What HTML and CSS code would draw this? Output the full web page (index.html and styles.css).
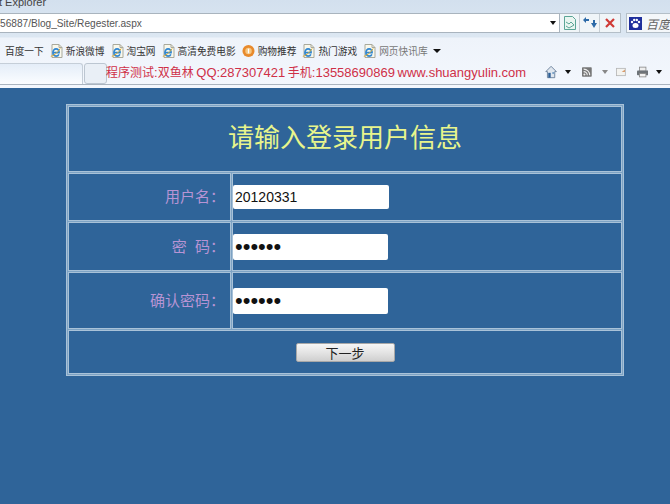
FILE: index.html
```html
<!DOCTYPE html>
<html lang="zh-CN">
<head>
<meta charset="utf-8">
<title>Regester</title>
<link rel="stylesheet" href="styles.css">
</head>
<body>
<svg class="defs" width="0" height="0" aria-hidden="true">
  <symbol id="ie" viewBox="0 0 13 14">
    <path d="M2 .5h7l3 3v10H2z" fill="#f9f8ec" stroke="#a9a99c"/>
    <path d="M9 .5v3h3" fill="none" stroke="#a9a99c"/>
    <path d="M3.200 8.600h5.900c.2-2.200-1.200-3.700-3-3.700-1.900 0-3.200 1.600-3.200 3.700 0 2.100 1.400 3.500 3.200 3.500 1.300 0 2.300-.6 2.800-1.700" fill="none" stroke="#2f86d2" stroke-width="1.600"/>
    <path d="M.8 12.300c1.800-.1 6.800-3.400 9.400-7.800" stroke="#e0ad30" fill="none"/>
  </symbol>
</svg>
<header class="chrome">
  <div class="titlebar">t Explorer</div>
  <div class="addressrow">
    <div class="address">
      <span class="url">56887/Blog_Site/Regester.aspx</span>
      <span class="caret"></span>
    </div>
    <div class="navbtns">
      <span class="navbtn"><svg width="14" height="16" viewBox="0 0 14 16"><path d="M1.500 1.500h8l3 3v10h-11z" fill="#e9f5f0" stroke="#5ba596"/><path d="M3 7l3 2 2-2 3 3M3 11l3 2 5-3" stroke="#5ba596" fill="none"/></svg></span>
      <span class="navbtn"><svg width="14" height="14" viewBox="0 0 14 14"><path d="M6 3H3V1L0 4l3 3V5h3z" fill="#2c6aa8"/><path d="M8 7h2V4h2v3h2l-3 5z" fill="#2c6aa8"/></svg></span>
      <span class="navbtn"><svg width="12" height="12" viewBox="0 0 12 12"><path d="M2 2l8 8M10 2l-8 8" stroke="#cf3a35" stroke-width="2.200"/></svg></span>
    </div>
    <div class="search">
      <svg width="13" height="13" viewBox="0 0 13 13"><rect width="13" height="13" fill="#1f2f9c"/><ellipse cx="6.500" cy="8.500" rx="3" ry="2.500" fill="#fff"/><circle cx="3" cy="5" r="1.200" fill="#fff"/><circle cx="5.200" cy="3" r="1.200" fill="#fff"/><circle cx="7.800" cy="3" r="1.200" fill="#fff"/><circle cx="10" cy="5" r="1.200" fill="#fff"/></svg>
      <span class="searchtext">百度一下</span>
    </div>
  </div>
  <div class="favorites">
    <span class="fav">百度一下</span>
    <span class="fav"><svg class="page"><use href="#ie"/></svg>新浪微博</span>
    <span class="fav"><svg class="page"><use href="#ie"/></svg>淘宝网</span>
    <span class="fav"><svg class="page"><use href="#ie"/></svg>高清免费电影</span>
    <span class="fav"><svg class="page" viewBox="0 0 14 14"><circle cx="7" cy="7" r="6.500" fill="#e88a2c"/><circle cx="7" cy="7" r="3.500" fill="#f6c67f"/><path d="M7 4.500v5" stroke="#fff" stroke-width="1.400"/></svg>购物推荐</span>
    <span class="fav"><svg class="page"><use href="#ie"/></svg>热门游戏</span>
    <span class="fav muted"><svg class="page"><use href="#ie"/></svg>网页快讯库<span class="caret wide"></span></span>
  </div>
  <div class="commands">
    <div class="tabs"><span class="tab"></span><span class="newtab"></span></div>
    <div class="notice"><span class="cjk">程序测试</span>:<span class="cjk">双鱼林</span> QQ:287307421 <span class="cjk">手机</span>:13558690869 www.shuangyulin.com</div>
    <div class="tools">
      <svg width="15" height="16" viewBox="0 0 15 16"><path d="M7.500 1L1 7.500h2V15h9V7.500h2z" fill="#dfe6ee" stroke="#5a7390"/><rect x="4" y="9" width="3" height="6" fill="#2d5f96"/><rect x="9" y="8" width="2.500" height="2.500" fill="#7fa4c8"/></svg>
      <span class="caret"></span>
      <svg class="rss" width="12" height="12" viewBox="0 0 12 12"><rect width="12" height="12" rx="1" fill="#777"/><circle cx="3" cy="9" r="1.300" fill="#eee"/><path d="M2 5.500c2.500 0 4.500 2 4.500 4.500M2 2.500c4.200 0 7.500 3.300 7.500 7.500" stroke="#eee" stroke-width="1.400" fill="none"/></svg>
      <span class="caret pale"></span>
      <svg class="mail" width="12" height="10" viewBox="0 0 12 10"><rect x=".5" y=".5" width="11" height="9" fill="#f3f3f0" stroke="#b4b4b4"/><path d="M7 5l4-3v3z" fill="#d99a6a"/></svg>
      <svg class="printer" width="14" height="14" viewBox="0 0 14 14"><rect x="3" y="1" width="8" height="5" fill="#eee" stroke="#888"/><rect x="0" y="5" width="14" height="6" rx="1" fill="#6d7378"/><rect x="3" y="9" width="8" height="4" fill="#f4f4f4" stroke="#888"/></svg>
      <span class="caret"></span>
    </div>
  </div>
</header>
<main class="page-body">
  <table class="form-table">
    <tr class="row-title"><td colspan="2" class="title">请输入登录用户信息</td></tr>
    <tr class="row-user">
      <td class="label">用户名：</td>
      <td class="field"><input class="input wide-input" type="text" value="20120331"></td>
    </tr>
    <tr class="row-pass">
      <td class="label">密&nbsp;&nbsp;码：</td>
      <td class="field"><input class="input tall" type="password" value="123456"></td>
    </tr>
    <tr class="row-confirm">
      <td class="label">确认密码：</td>
      <td class="field"><input class="input tall" type="password" value="123456"></td>
    </tr>
    <tr class="row-submit">
      <td colspan="2" class="actions"><button class="next" type="button">下一步</button></td>
    </tr>
  </table>
</main>
</body>
</html>
```
FILE: styles.css
```css
* { box-sizing: border-box; }
html, body { margin: 0; height: 100%; }
body {
  background: #2f6499;
  font-family: "Liberation Sans", "Noto Sans CJK SC", sans-serif;
  overflow: hidden;
}
.defs { display: block; height: 0; }
.chrome {
  height: 88px;
  display: flex;
  flex-direction: column;
  background: linear-gradient(#d3e0ee, #dce7f2 37px, #eef3fa 38px, #f3f7fd 84px);
  overflow: hidden;
}
.titlebar {
  height: 13px;
  line-height: 4px;
  font-size: 11px;
  color: #444;
  text-indent: -1px;
}
.addressrow {
  height: 20px;
  display: flex;
  gap: 7px;
}
.address {
  width: 560px;
  flex: none;
  display: flex;
  align-items: center;
  justify-content: space-between;
  background: #fff;
  border: 1px solid #a9b4be;
  border-left: 0;
  padding-right: 3px;
}
.url { font-size: 10.15px; color: #555; }
.caret {
  display: inline-block;
  width: 0;
  height: 0;
  border-style: solid;
  border-width: 4px 3.500px 0;
  border-color: #111 transparent transparent;
}
.caret.wide { border-width: 4px 4px 0; margin-left: 2px; vertical-align: 2px; }
.caret.pale { border-top-color: #888; }
.navbtns {
  display: flex;
  margin-left: -7px;
  background: #f0f5f8;
  border: 1px solid #b4bfc8;
  border-left: 0;
}
.navbtn {
  width: 20px;
  display: flex;
  align-items: center;
  justify-content: center;
  border-right: 1px solid #c6ced4;
}
.navbtn:last-child { border-right: 0; }
.search {
  flex: 1;
  display: flex;
  align-items: center;
  gap: 4px;
  padding-left: 2px;
  margin-left: -2px;
  margin-right: -30px;
  background: #f4f7fa;
  border: 1px solid #b4bfc8;
}
.searchtext { font-size: 12px; font-style: italic; color: #666; white-space: nowrap; }
.favorites {
  height: 25px;
  margin-top: 5px;
  display: flex;
  align-items: center;
  gap: 6px;
  padding-left: 5px;
  font-size: 9.7px;
  color: #333;
  white-space: nowrap;
}
.fav { display: inline-flex; align-items: center; gap: 3px; }
.fav.muted { color: #777; }
.page { width: 13px; height: 14px; flex: none; }
.commands {
  height: 22px;
  flex: none;
  display: flex;
  align-items: flex-end;
  border-bottom: 1px solid #aab4bf;
}
.tabs { display: flex; width: 107px; flex: none; height: 21px; gap: 1px; }
.tab {
  width: 83px;
  background: linear-gradient(#e4edf8, #fbfdff);
  border: 1px solid #c5ced8;
  border-left: 0;
  border-bottom: 0;
  border-radius: 0 3px 0 0;
}
.newtab {
  width: 23px;
  background: #e9eff6;
  border: 1px solid #bcc6d1;
  border-radius: 3px;
}
.notice {
  align-self: center;
  margin-bottom: 4px;
  font-size: 13px;
  word-spacing: -1px;
  color: #cf3048;
  white-space: nowrap;
  margin-left: -1px;
}
.cjk { font-size: 12px; }
.tools {
  display: flex;
  align-items: center;
  margin-left: auto;
  margin-bottom: 1px;
  height: 22px;
  flex: none;
  width: 125px;
}
.tools .caret { margin: 0 8px; }
.tools .rss { margin-left: 3px; }
.tools .caret.pale { margin: 0 8px 0 10px; }
.tools .mail { margin-right: 11px; }
.page-body { padding: 16px 0 0 66px; }
.form-table {
  width: 558px;
  height: 272px;
  border-collapse: separate;
  border-spacing: 1px;
  border: 1px solid #a9c2d8;
  background: #7ea3c4;
}
.form-table td {
  border: 1px solid #a9c2d8;
  background: #2f6499;
  padding: 0;
}
.row-title { height: 66px; }
.row-user { height: 48px; }
.row-pass { height: 49px; }
.row-confirm { height: 57px; }
.row-submit { height: 44px; }
.title {
  text-align: center;
  font-size: 26px;
  color: #e8f58c;
  padding-bottom: 8px !important;
}
.label {
  width: 163px;
  text-align: right;
  padding: 0 5px 3px 0 !important;
  font-size: 15px;
  color: #b794d4;
}
.input {
  display: block;
  width: 155px;
  height: 26px;
  padding: 0 2px;
  border: 0;
  border-radius: 2px;
  background: #fff;
  font-family: "Liberation Sans", sans-serif;
  font-size: 14px;
  color: #111;
}
.wide-input { width: 156px; height: 24px; }
.input[type="password"] { font-size: 22px; }
.actions { text-align: center; }
.next {
  width: 99px;
  height: 19px;
  padding: 0;
  border: 1px solid #a8a8a8;
  border-radius: 2px;
  background: linear-gradient(#f6f6f6, #e4e4e4 50%, #cfcfcf);
  font-family: "Noto Sans CJK SC", sans-serif;
  font-size: 13px;
  line-height: 15px;
  color: #222;
  vertical-align: middle;
}
```
